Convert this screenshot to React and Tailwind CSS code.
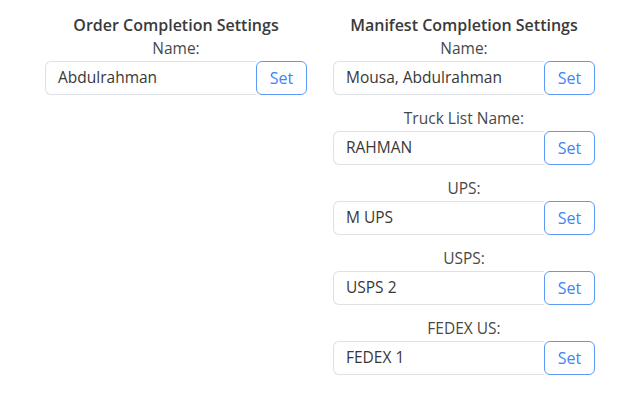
import React from "react";

function Field({ label, value }) {
  return (
    <div className="flex flex-col">
      <div className="h-5 text-center text-[15.5px] leading-5 text-[#484848]">{label}</div>
      <div className="mt-[3px] flex h-[34px]">
        <div className="flex flex-1 items-center rounded-l-[6px] border border-r-0 border-[#dee2e6] bg-white pl-3 text-[15.5px] text-[#383838]">
          {value}
        </div>
        <button className="w-[51px] rounded-[6px] border border-[#5b9bf7] bg-white text-[16px] text-[#3f83f8]">
          Set
        </button>
      </div>
    </div>
  );
}

export default function App() {
  return (
    <div
      className="h-[400px] w-[640px] bg-white"
      style={{ fontFamily: '"Open Sans", "Noto Sans", sans-serif' }}
    >
      <div className="mx-auto grid w-[550px] grid-cols-2 gap-[26px] pt-[15px]">
        <div className="flex flex-col">
          <div className="h-5 text-center text-[16px] font-semibold leading-5 text-[#3a3a3a]">
            Order Completion Settings
          </div>
          <div className="mt-[3px] flex flex-col gap-[13px]">
            <Field label="Name:" value="Abdulrahman" />
          </div>
        </div>
        <div className="flex flex-col">
          <div className="h-5 text-center text-[16px] font-semibold leading-5 text-[#3a3a3a]">
            Manifest Completion Settings
          </div>
          <div className="mt-[3px] flex flex-col gap-[13px]">
            <Field label="Name:" value="Mousa, Abdulrahman" />
            <Field label="Truck List Name:" value="RAHMAN" />
            <Field label="UPS:" value="M UPS" />
            <Field label="USPS:" value="USPS 2" />
            <Field label="FEDEX US:" value="FEDEX 1" />
          </div>
        </div>
      </div>
    </div>
  );
}
